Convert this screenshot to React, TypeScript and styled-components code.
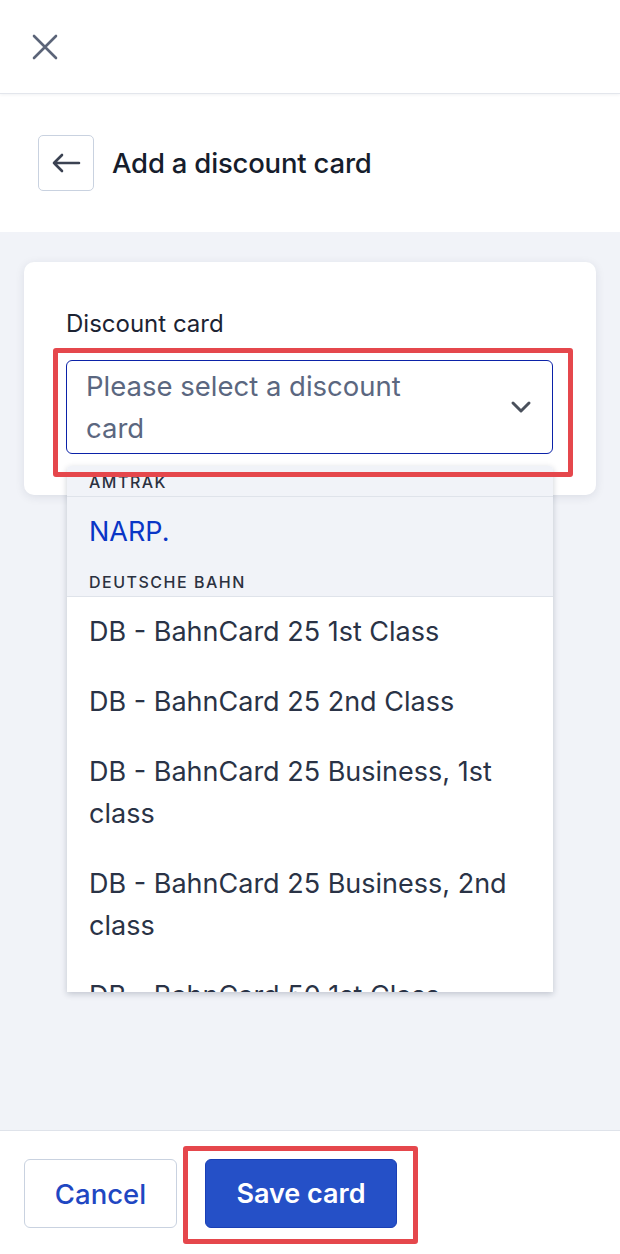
import React from "react";
import styled, { createGlobalStyle } from "styled-components";

const GlobalStyle = createGlobalStyle`
  * { box-sizing: border-box; }
  html, body { margin: 0; padding: 0; }
  body {
    font-family: Inter, "Noto Sans", "Liberation Sans", sans-serif;
    color: #1c2333;
    background: #fff;
  }
`;

type Option = { label: string; active?: boolean };
type Group = { name: string; options: Option[] };

const groups: Group[] = [
  { name: "Amtrak", options: [{ label: "NARP.", active: true }] },
  {
    name: "Deutsche Bahn",
    options: [
      { label: "DB - BahnCard 25 1st Class" },
      { label: "DB - BahnCard 25 2nd Class" },
      { label: "DB - BahnCard 25 Business, 1st class" },
      { label: "DB - BahnCard 25 Business, 2nd class" },
      { label: "DB - BahnCard 50 1st Class" },
      { label: "DB - BahnCard 50 2nd Class" },
    ],
  },
];

const App: React.FC = () => {
  return (
    <Page>
      <GlobalStyle />
      <TopBar>
        <IconButton aria-label="Close">
          <svg width="26" height="26" viewBox="0 0 26 26">
            <path d="M2 2 L24 24 M24 2 L2 24" stroke="#5b6478" strokeWidth="2.6" strokeLinecap="round" />
          </svg>
        </IconButton>
      </TopBar>
      <Header>
        <BackButton aria-label="Back">
          <svg width="30" height="20" viewBox="0 0 30 20">
            <path d="M28 10 H3 M11 2 L3 10 L11 18" stroke="#3b4252" strokeWidth="2.6" fill="none" strokeLinecap="round" strokeLinejoin="round" />
          </svg>
        </BackButton>
        <Title>Add a discount card</Title>
      </Header>
      <Body>
        <Card>
          <Label>Discount card</Label>
          <SelectWrap>
            <Select>
              <Placeholder>Please select a discount card</Placeholder>
              <svg width="22" height="14" viewBox="0 0 22 14">
                <path d="M3 3 L11 11 L19 3" stroke="#4a505c" strokeWidth="3" fill="none" strokeLinecap="round" strokeLinejoin="round" />
              </svg>
            </Select>
            <Highlight $top={-12} $left={-13} $right={-20} $bottom={-23} />
            <Dropdown>
              {groups.map((g) => (
                <React.Fragment key={g.name}>
                  <GroupHeader $first={g.name === "Amtrak"}>{g.name}</GroupHeader>
                  {g.options.map((o) => (
                    <OptionRow key={o.label} $active={o.active}>
                      {o.label}
                    </OptionRow>
                  ))}
                </React.Fragment>
              ))}
            </Dropdown>
          </SelectWrap>
        </Card>
      </Body>
      <Footer>
        <GhostButton>Cancel</GhostButton>
        <SaveWrap>
          <PrimaryButton>Save card</PrimaryButton>
          <Highlight $top={-13} $left={-22} $right={-21} $bottom={-16} />
        </SaveWrap>
      </Footer>
    </Page>
  );
};

export default App;

const Page = styled.div`
  width: 620px;
  height: 1254px;
  display: flex;
  flex-direction: column;
  overflow: hidden;
`;

const TopBar = styled.div`
  height: 94px;
  display: flex;
  align-items: center;
  padding-left: 31px;
  border-bottom: 1px solid #e3e6ec;
  box-shadow: 0 1px 3px rgba(20, 30, 60, 0.06);
  position: relative;
  z-index: 1;
  background: #fff;
`;

const IconButton = styled.button`
  border: none;
  background: none;
  padding: 0;
  width: 28px;
  height: 28px;
  display: flex;
  align-items: center;
  justify-content: center;
`;

const Header = styled.div`
  height: 138px;
  display: flex;
  align-items: center;
  gap: 18px;
  padding-left: 38px;
  background: #fff;
`;

const BackButton = styled.button`
  width: 56px;
  height: 56px;
  border: 1.5px solid #c9d2e0;
  border-radius: 5px;
  background: #fff;
  display: flex;
  align-items: center;
  justify-content: center;
  padding: 0;
`;

const Title = styled.h1`
  margin: 0;
  font-size: 27.5px;
  font-weight: 500;
  color: #161d2c;
  letter-spacing: -0.2px;
`;

const Body = styled.div`
  flex: 1;
  background: #f1f3f8;
  padding: 30px 24px 0;
`;

const Card = styled.div`
  background: #fff;
  border-radius: 10px;
  box-shadow: 0 2px 10px rgba(30, 40, 70, 0.1);
  padding: 47px 43px 41px 42px;
`;

const Label = styled.div`
  font-size: 24px;
  line-height: 30px;
  font-weight: 400;
  color: #1c2333;
  margin-bottom: 21px;
`;

const SelectWrap = styled.div`
  position: relative;
`;

const Select = styled.div`
  height: 94px;
  border: 1.5px solid #0b22a8;
  border-radius: 6px;
  display: flex;
  align-items: center;
  justify-content: space-between;
  padding: 0 20px 0 19px;
`;

const Placeholder = styled.span`
  font-size: 27.5px;
  line-height: 42px;
  color: #5b6780;
  width: 340px;
`;

const Highlight = styled.div<{ $top: number; $left: number; $right: number; $bottom: number }>`
  position: absolute;
  top: ${(p) => p.$top}px;
  left: ${(p) => p.$left}px;
  right: ${(p) => p.$right}px;
  bottom: ${(p) => p.$bottom}px;
  border: 5px solid #e5474c;
  border-radius: 3px;
  pointer-events: none;
  z-index: 3;
`;

const Dropdown = styled.div`
  position: absolute;
  top: 106px;
  left: 1px;
  width: 486px;
  height: 526px;
  overflow: hidden;
  background: #fff;
  border-radius: 4px 4px 0 0;
  box-shadow: 0 2px 6px rgba(20, 30, 60, 0.22);
  z-index: 2;
`;

const GroupHeader = styled.div<{ $first?: boolean }>`
  height: ${(p) => (p.$first ? 31 : 30)}px;
  background: #f1f3f8;
  border-bottom: 1.5px solid #dfe3ea;
  padding: 0 22px;
  font-size: 16px;
  font-weight: 500;
  letter-spacing: 1.5px;
  text-transform: uppercase;
  color: #2b3140;
  display: flex;
  align-items: ${(p) => (p.$first ? "flex-start" : "center")};
  line-height: ${(p) => (p.$first ? "32px" : "30px")};
`;

const OptionRow = styled.div<{ $active?: boolean }>`
  padding: 14px 36px 14px 22px;
  font-size: 27px;
  line-height: 42px;
  color: ${(p) => (p.$active ? "#0a36c6" : "#2a3346")};
  background: ${(p) => (p.$active ? "#f1f3f8" : "#fff")};
  width: 100%;
`;

const Footer = styled.div`
  height: 124px;
  border-top: 1.5px solid #dfe3ea;
  background: #fff;
  display: flex;
  align-items: flex-start;
  gap: 28px;
  padding: 28px 24px 0;
`;

const GhostButton = styled.button`
  width: 153px;
  height: 69px;
  border: 1.5px solid #c9d2e0;
  border-radius: 6px;
  background: #fff;
  color: #1f47c2;
  font-family: inherit;
  font-size: 27.5px;
  font-weight: 500;
`;

const SaveWrap = styled.div`
  position: relative;
`;

const PrimaryButton = styled.button`
  width: 192px;
  height: 69px;
  border: 1px solid #1a3fb5;
  border-radius: 6px;
  background: #2550c7;
  color: #fff;
  font-family: inherit;
  font-size: 27px;
  font-weight: 600;
`;
